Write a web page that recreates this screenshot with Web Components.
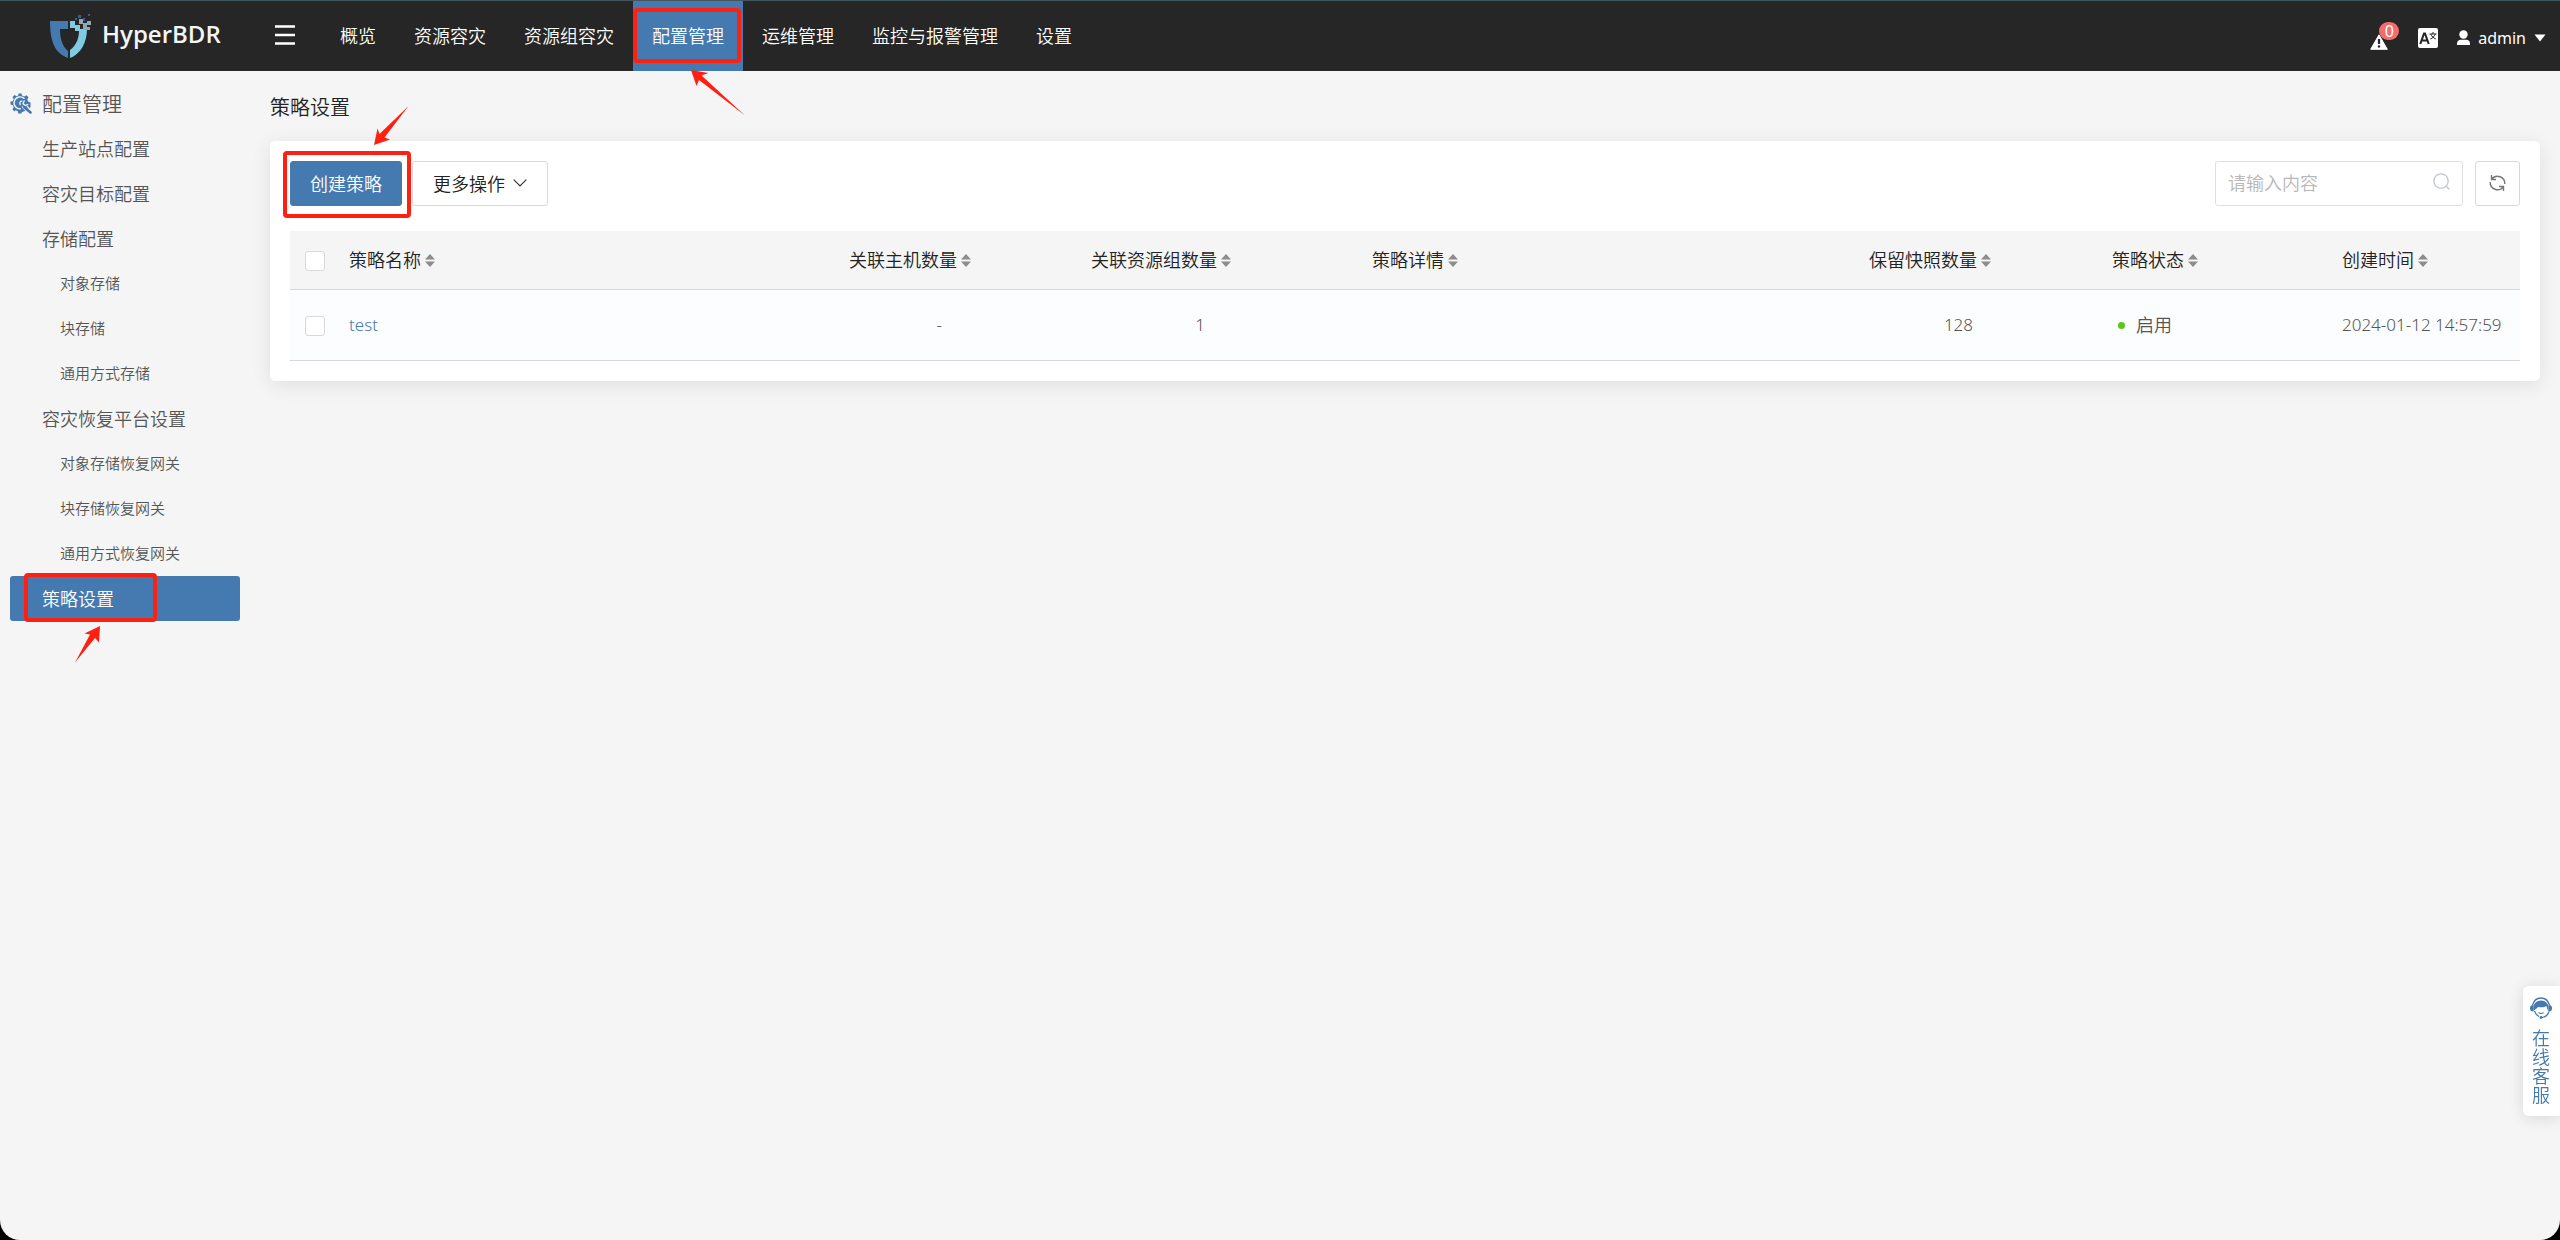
<!DOCTYPE html>
<html lang="zh-CN">
<head>
<meta charset="utf-8">
<title>HyperBDR</title>
<style>
html { background: #000; }
body {
  margin: 0;
  font-family: "Noto Sans", "Noto Sans CJK SC", sans-serif;
  font-size: 18px;
  font-weight: 350;
  color: #222;
}
</style>
</head>
<body>
<hb-app>
  <hb-header slot="header">
    <hb-nav-item>概览</hb-nav-item>
    <hb-nav-item>资源容灾</hb-nav-item>
    <hb-nav-item>资源组容灾</hb-nav-item>
    <hb-nav-item active>配置管理<hb-mark slot="mark" kind="nav"></hb-mark></hb-nav-item>
    <hb-nav-item>运维管理</hb-nav-item>
    <hb-nav-item>监控与报警管理</hb-nav-item>
    <hb-nav-item>设置</hb-nav-item>
  </hb-header>
  <hb-sidebar slot="side" heading="配置管理">
    <hb-side-item>生产站点配置</hb-side-item>
    <hb-side-item>容灾目标配置</hb-side-item>
    <hb-side-item>存储配置</hb-side-item>
    <hb-side-item sub>对象存储</hb-side-item>
    <hb-side-item sub>块存储</hb-side-item>
    <hb-side-item sub>通用方式存储</hb-side-item>
    <hb-side-item>容灾恢复平台设置</hb-side-item>
    <hb-side-item sub>对象存储恢复网关</hb-side-item>
    <hb-side-item sub>块存储恢复网关</hb-side-item>
    <hb-side-item sub>通用方式恢复网关</hb-side-item>
    <hb-side-item active>策略设置<hb-mark slot="mark" kind="side"></hb-mark></hb-side-item>
  </hb-sidebar>
  <hb-panel heading="策略设置">
    <hb-toolbar></hb-toolbar>
    <hb-policy-table></hb-policy-table>
  </hb-panel>
  <hb-support slot="float"></hb-support>
</hb-app>

<script>
const define = (name, html, setup) => {
  const template = document.createElement('template');
  template.innerHTML = '<style>*{box-sizing:border-box}button,input{font:inherit;margin:0}a{color:inherit;text-decoration:none}svg{display:block}</style>' + html;
  customElements.define(name, class extends HTMLElement {
    constructor() {
      super();
      this.attachShadow({ mode: 'open' }).append(template.content.cloneNode(true));
    }
    connectedCallback() { if (setup) setup(this, this.shadowRoot); }
  });
};

define('hb-app', `
<style>
:host { display: flex; flex-direction: column; min-height: 100vh; box-sizing: border-box; background: #f5f5f5; border-radius: 0 0 20px 20px; overflow: hidden; }
.body { display: flex; flex: 1; }
main { flex: 1; min-width: 0; padding: 0 20px 20px 30px; }
</style>
<slot name="header"></slot>
<div class="body"><slot name="side"></slot><main><slot></slot></main></div>
<slot name="float"></slot>`);

define('hb-header', `
<style>
:host { display: block; position: relative; z-index: 1; background: #262626; color: #fff; border-top: 1px solid #43565e; }
header { display: flex; align-items: stretch; height: 70px; padding: 0 14px 0 49px; }
.brand { display: flex; align-items: center; gap: 10px; width: 226px; font: 600 24px/32px "Open Sans", "Noto Sans", sans-serif; color: #f4f4f4; }
.brand span { padding-bottom: 4px; }
button { border: 0; padding: 0; background: none; color: inherit; cursor: pointer; }
.menu { width: 20px; margin-right: 26px; padding-bottom: 2px; }
nav { display: flex; flex: 1; }
.tools { display: flex; align-items: center; }
.alert { position: relative; margin-right: 30px; padding-top: 12px; }
.badge { position: absolute; left: 9px; top: 0; min-width: 20px; height: 18px; border-radius: 9px; background: #f56c6c; font-size: 16px; font-weight: 400; line-height: 18px; text-align: center; }
.lang { margin: 4px 19px 0 0; }
.user { display: flex; align-items: center; gap: 8px; font-size: 16px; line-height: 24px; padding-top: 4px; font-weight: 400; }
</style>
<header>
  <a class="brand" href="#" aria-label="HyperBDR">
    <svg width="43" height="44" viewBox="0 0 43 44"><path d="M1 7h18v8h-8c0 9 2 17 8 22v7C6 39 1 28 1 7z" fill="#457ab1"/><path d="M21 7h5v4h5v4h7c0 13-6 25-17 29v-8c7-5 9-13 9-19h-4v-3h-5z" fill="#7fcbe1"/><path d="M38 7h4v4h-4zM34 9h4v4h-4zM30 5h4v5h-4zM34 13h7v3h-7z" fill="#8fa9b4"/><path d="M29 1h3v3h-3zM34 4h2v3h-2zM39 0h2v2h-2zM26 4h2v2h-2z" fill="#35608c"/></svg>
    <span>HyperBDR</span>
  </a>
  <button class="menu" aria-label="菜单"><svg width="20" height="20" viewBox="0 0 20 20"><path d="M0 1.5h20M0 10h20M0 18.5h20" stroke="#fff" stroke-width="2.4"/></svg></button>
  <nav><slot></slot></nav>
  <div class="tools">
    <button class="alert" aria-label="告警"><svg width="18" height="16" viewBox="0 0 18 16"><path d="M9 .8 17.3 15.3H.7z" fill="#fff" stroke="#fff" stroke-linejoin="round"/><path d="M9 5v5" stroke="#262626" stroke-width="2.2"/><circle cx="9" cy="12.5" r="1.2" fill="#262626"/></svg><span class="badge">0</span></button>
    <button class="lang" aria-label="语言"><svg width="20" height="20" viewBox="0 0 20 20"><rect width="20" height="20" rx="2" fill="#fff"/><path d="M2.3 16 6 5.5h1L10.700 16M3.800 12.500h5.500" fill="none" stroke="#262626" stroke-width="2.100"/><path d="M11.500 6h7M15 4v2M17.300 6c-.8 2.200-2.500 4-5 5M12.800 6c.8 2.200 2.500 4 5 5" fill="none" stroke="#262626"/></svg></button>
    <button class="user"><svg width="13" height="16" viewBox="0 0 13 16"><circle cx="6.500" cy="4.500" r="4.200" fill="#fff"/><path d="M0 15v-1.500C0 11 2 9.800 3.500 9.800h6c1.500 0 3.500 1.200 3.500 3.700V15z" fill="#fff"/></svg>admin<svg width="12" height="8" viewBox="0 0 12 8"><path d="M.5.5h11L6 7.500z" fill="#fff"/></svg></button>
  </div>
</header>`);

define('hb-nav-item', `
<style>
:host { display: flex; position: relative; }
a { display: flex; align-items: center; padding: 0 19px 1px; white-space: nowrap; line-height: 26px; }
:host([active]) { background: #457ab1; }
</style>
<a href="#"><slot></slot></a><slot name="mark"></slot>`);

define('hb-sidebar', `
<style>
:host { display: block; width: 250px; padding: 10px 10px 0; box-sizing: border-box; margin-right: -10px; color: #555; }
h2 { display: flex; align-items: center; gap: 10px; height: 45px; margin: 0; padding-top: 2px; font-size: 20px; font-weight: inherit; line-height: 30px; }
h2 svg { margin-bottom: 3px; }
</style>
<nav>
<h2><svg width="22" height="21" viewBox="0 0 22 21"><path d="M8.500.5h3l.7 2.300 2 .8L16.500 2.300l2 2-1.200 2.300.8 2 2.400.8v5l-4 3-4.500 1.500-.6 1.600h-3l-.8-2.500-2-.8L4.500 18.500l-2-2 1.200-2.300-.8-2L.5 11.400V8.800L2.900 8l.8-2L2.500 4l2-2 2.300 1.200 1.200-.5z" fill="#457ab1"/><path d="M14.500 5.800A6 6 0 1 0 11 15.800" fill="none" stroke="#f5f5f5" stroke-width="1.400"/><path d="M12.500 8.200c-2.500-.5-3.500 2-2 3.800M14.500 7.500l-1.500 3 2 2 3.300-1.200M12 13.500l5 5M17 13.200l3 3" fill="none" stroke="#f5f5f5" stroke-width="1.300"/><path d="m14 14 6.500 5.500" stroke="#457ab1" stroke-width="2.600" stroke-linecap="round"/></svg><span></span></h2>
<slot></slot>
</nav>`, (el, root) => { root.querySelector('h2 span').textContent = el.getAttribute('heading'); });

define('hb-side-item', `
<style>
:host { display: block; position: relative; height: 45px; border-radius: 3px; }
a { display: flex; align-items: center; height: 100%; padding: 1px 0 0 32px; line-height: 26px; }
:host([sub]) a { padding: 0 0 2px 50px; font-size: 15px; }
:host([active]) { background: #457ab1; color: #fff; }
</style>
<a href="#"><slot></slot></a><slot name="mark"></slot>`);

/* Red frame and arrow laid over the control that it points out. */
const marks = {
  nav: { box: [0, 7, 108, 55], arrow: '58,69 75.500,72 68.500,74.500 112,114.500 66,79 63.500,85' },
  side: { box: [14, -3, 133, 49], arrow: '90,50 74.500,57.500 80,58.500 65,86.500 85,62 89,66.500' },
  create: { box: [-7, -10, 128, 67], arrow: '84,-16 87.500,-32.500 89.500,-27 118.500,-55 94.500,-23.500 100,-21.500' }
};
define('hb-mark', `
<style>
:host { position: absolute; left: 0; top: 0; width: 0; height: 0; pointer-events: none; z-index: 2; }
svg { overflow: visible; }
</style>
<svg width="1" height="1" aria-hidden="true"><rect fill="none" stroke="#ff2012" stroke-width="4" rx="2"/><polygon fill="#ff2012"/></svg>`, (el, root) => {
  const { box: [x, y, w, h], arrow } = marks[el.getAttribute('kind')];
  const rect = root.querySelector('rect');
  Object.entries({ x: x + 2, y: y + 2, width: w - 4, height: h - 4 }).forEach(([k, v]) => rect.setAttribute(k, v));
  root.querySelector('polygon').setAttribute('points', arrow);
});

define('hb-panel', `
<style>
:host { display: block; }
h1 { margin: 0; padding: 22px 0 18px; font-size: 20px; font-weight: inherit; line-height: 30px; }
section { background: #fff; border-radius: 5px; padding: 20px; box-shadow: 0 4px 20px rgba(0,0,0,.09); }
</style>
<h1></h1><section><slot></slot></section>`, (el, root) => { root.querySelector('h1').textContent = el.getAttribute('heading'); });

define('hb-toolbar', `
<style>
:host { display: flex; justify-content: space-between; margin-bottom: 25px; }
.group { display: flex; gap: 10px; }
.right { gap: 12px; }
.create { position: relative; }
button { height: 45px; border: 1px solid #d9d9d9; border-radius: 3px; background: #fff; color: #222; padding: 0 19px 2px; cursor: pointer; }
.create button { width: 112px; background: #457ab1; border-color: #457ab1; color: #fff; }
.more { display: flex; align-items: center; justify-content: center; gap: 8px; width: 136px; }
.refresh { width: 45px; padding: 0 13px 2px; }
label { display: flex; align-items: center; width: 248px; height: 45px; padding: 0 12px 2px; border: 1px solid #dcdfe6; border-radius: 3px; }
input { flex: 1; min-width: 0; border: 0; outline: 0; padding: 0; background: none; color: #555; line-height: 26px; }
input::placeholder { color: #b8b8b8; opacity: 1; }
label svg { margin-bottom: 2px; }
</style>
<div class="group">
  <div class="create"><button>创建策略</button><hb-mark kind="create"></hb-mark></div>
  <button class="more">更多操作<svg width="14" height="8" viewBox="0 0 14 8"><path d="M.7.7 7 7 13.300.7" fill="none" stroke="#333" stroke-width="1.200"/></svg></button>
</div>
<div class="group right">
  <label><input type="text" placeholder="请输入内容" aria-label="请输入内容"><svg width="17" height="17" viewBox="0 0 17 17"><circle cx="8" cy="8" r="7.200" fill="none" stroke="#c0c4cc" stroke-width="1.300"/><path d="m13 13 3.500 3.500" stroke="#c0c4cc" stroke-width="1.300"/></svg></label>
  <button class="refresh" aria-label="刷新"><svg width="17" height="18" viewBox="0 0 17 18"><path d="M2.500 1v4.500H7M2.700 5.200A7.300 7.300 0 0 1 15.800 10M14.500 17v-4.500H10M14.300 12.800A7.300 7.300 0 0 1 1.200 8" fill="none" stroke="#777" stroke-width="1.400"/></svg></button>
</div>`);

const columns = [
  ['策略名称', 500], ['关联主机数量', 242], ['关联资源组数量', 281], ['策略详情', 497],
  ['保留快照数量', 243], ['策略状态', 230], ['创建时间', 191]
];
define('hb-policy-table', `
<style>
:host { display: block; }
table { width: 100%; table-layout: fixed; border-collapse: separate; border-spacing: 0; }
th, td { padding: 0 0 0 13px; text-align: left; font-weight: inherit; line-height: 26px; border-bottom: 1px solid #d9d9d9; white-space: nowrap; }
th:first-child, td:first-child { padding-left: 15px; }
th { height: 59px; background: #f5f5f5; }
td { height: 71px; background: #fcfdff; color: #555; font-size: 17px; }
th button { display: flex; align-items: center; gap: 4px; border: 0; padding: 0; background: none; color: inherit; cursor: pointer; }
th:first-child, td:first-child { padding-top: 2px; }
input { display: block; appearance: none; width: 20px; height: 20px; border: 1px solid #d9d9d9; border-radius: 3px; background: #fff; }
a { color: #457ab1; }
.num { display: inline-block; text-align: right; }
.host { width: 93px; } .res { width: 114px; } .snap { width: 104px; }
.state { display: flex; align-items: center; gap: 11px; padding-left: 6px; font-size: 18px; }
.state i { width: 7px; height: 7px; border-radius: 50%; background: #5ac51c; }
</style>
<table>
  <colgroup><col style="width:46px">${columns.map(c => `<col style="width:${c[1]}px">`).join('')}</colgroup>
  <thead><tr><th><input type="checkbox" aria-label="全选"></th>${columns.map(c => `<th><button>${c[0]}<svg width="10" height="13" viewBox="0 0 10 13"><path d="M0 5.500 5 0l5 5.500zM0 7.500h10L5 13z" fill="#8c8c8c"/></svg></button></th>`).join('')}</tr></thead>
  <tbody><tr>
    <td><input type="checkbox" aria-label="test"></td>
    <td><a href="#">test</a></td>
    <td><span class="num host">-</span></td>
    <td><span class="num res">1</span></td>
    <td></td>
    <td><span class="num snap">128</span></td>
    <td><span class="state"><i></i>启用</span></td>
    <td>2024-01-12 14:57:59</td>
  </tr></tbody>
</table>`);

define('hb-support', `
<style>
:host { position: fixed; right: 0; bottom: 124px; z-index: 3; }
button { display: flex; flex-direction: column; align-items: center; gap: 10px; width: 37px; height: 130px; padding: 11px 1px 0 0; border: 0; border-radius: 6px 0 0 6px; background: #fff; color: #457ab1; box-shadow: 0 2px 16px rgba(0,0,0,.12); cursor: pointer; }
span { width: 18px; font-size: 18px; line-height: 19px; white-space: normal; word-break: break-all; }
</style>
<button><svg width="22" height="22" viewBox="0 0 22 22"><path d="M2.500 8C4 3 7.500 1 11 1s7 2 8.500 7" fill="none" stroke="#457ab1" stroke-width="1.300"/><path d="M3.500 14C2.500 7 6 3.500 11 3.500S19.500 7 18.500 14c-1-1-1.500-3-2-5-3 2-7 1-8.500 1-1 1.500-2.500 2-4.500 4z" fill="#457ab1"/><path d="M3.500 8v6.500H3C1 14.500 0 13.500 0 11.300S1 8 3 8zM18.500 8v6.500h.5c2 0 3-1 3-3.200S21 8 19 8z" fill="#457ab1"/><path d="M4.500 14c1 3 2.500 4.500 4.500 5.500M19 14.500c-1 3.500-3.500 5.500-7 6M8.500 15.500q2.500 2 5 0" fill="none" stroke="#457ab1" stroke-width="1.200"/><circle cx="11" cy="20.500" r="1.400" fill="#457ab1"/></svg><span>在线客服</span></button>`);
</script>
</body>
</html>
